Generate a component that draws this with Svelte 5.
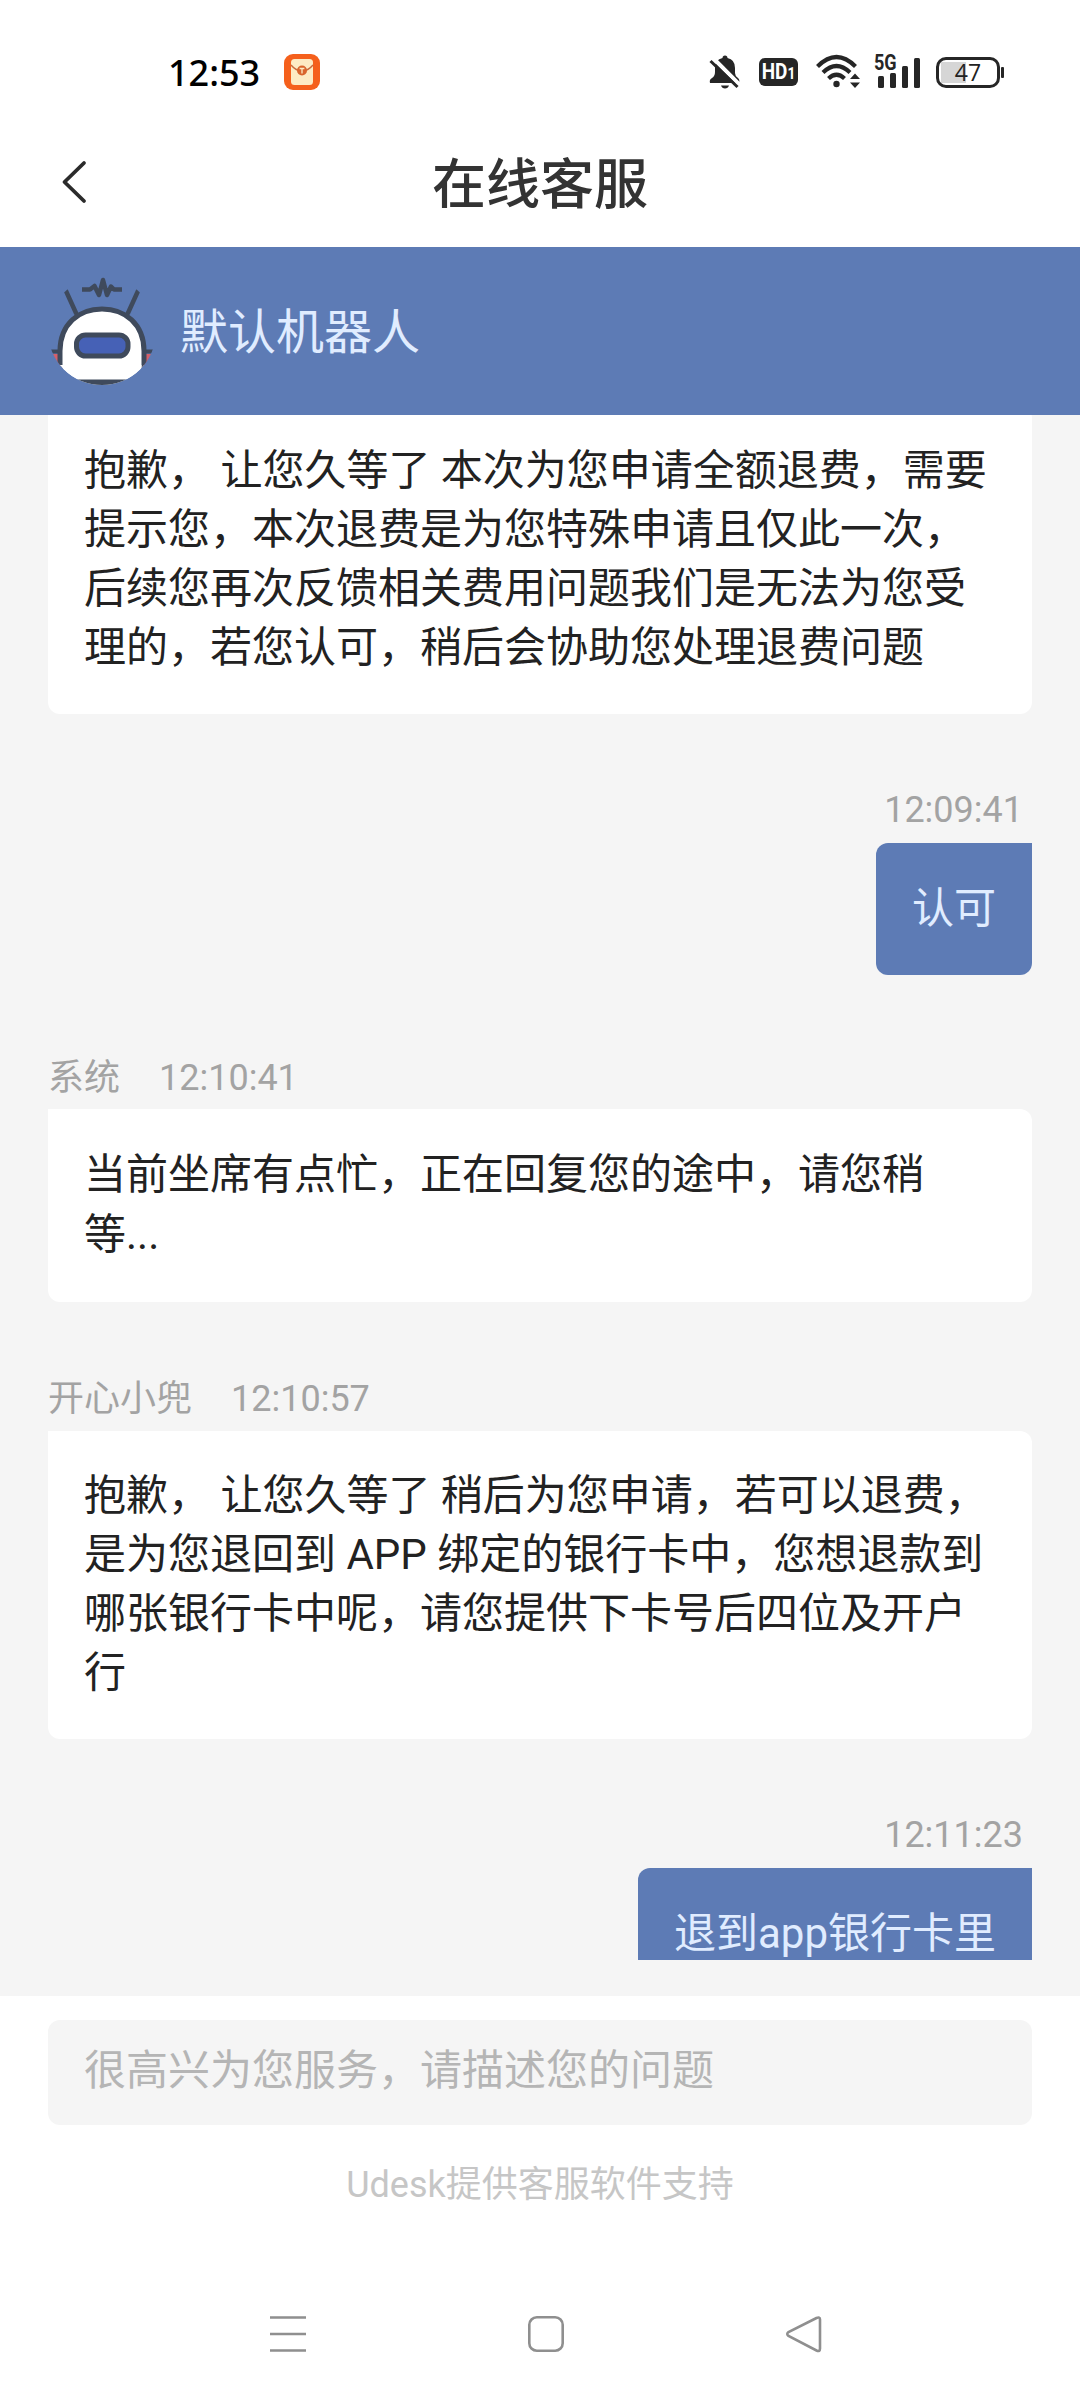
<script lang="ts">
	interface Message {
		id: number;
		name?: string;
		time?: string;
		lines: string[];
		kind?: 'mine' | 'system';
	}

	const messages: Message[] = [
		{
			id: 1,
			lines: [
				'抱歉， 让您久等了 本次为您申请全额退费，需要',
				'提示您，本次退费是为您特殊申请且仅此一次，',
				'后续您再次反馈相关费用问题我们是无法为您受',
				'理的，若您认可，稍后会协助您处理退费问题'
			]
		},
		{ id: 2, time: '12:09:41', lines: ['认可'], kind: 'mine' },
		{
			id: 3,
			name: '系统',
			time: '12:10:41',
			lines: ['当前坐席有点忙，正在回复您的途中，请您稍', '等...'],
			kind: 'system'
		},
		{
			id: 4,
			name: '开心小兜',
			time: '12:10:57',
			lines: [
				'抱歉， 让您久等了 稍后为您申请，若可以退费，',
				'是为您退回到 APP 绑定的银行卡中，您想退款到',
				'哪张银行卡中呢，请您提供下卡号后四位及开户',
				'行'
			]
		},
		{ id: 5, time: '12:11:23', lines: ['退到app银行卡里'], kind: 'mine' }
	];

	let draft = $state('');
</script>

<div class="screen">
	<div class="status-bar">
		<span class="clock">12:53</span>
		<svg class="app-badge" width="36" height="36" viewBox="0 0 36 36">
			<rect width="36" height="36" rx="9" fill="#f5601c" />
			<rect x="7" y="5" width="22" height="26" rx="3.5" fill="#fdebc4" />
			<path d="M7 11 Q12 17 18 17 Q24 17 29 11" fill="none" stroke="#c96a3c" stroke-width="1.4" />
			<circle cx="18" cy="16.5" r="5" fill="#d9652d" />
			<path d="M15.6 14.5 H20.4 M18 14.5 V19.5" stroke="#fdebc4" stroke-width="1.3" />
		</svg>

		<div class="status-icons">
			<svg width="32" height="34" viewBox="0 0 32 34">
				<path d="M1 28 Q0 24.500 3 23 Q6 21 6 17 V13 Q6 4.500 13.500 3 Q13.500 .5 16 .5 Q18.500 .5 18.500 3 Q26 4.500 26 13 V18 Q26 21 29 23 Q31 24.500 30 28 Z" fill="#262626" />
				<path d="M12 30.500 H20 Q19 33.500 16 33.500 Q13 33.500 12 30.500 Z" fill="#262626" />
				<path d="M4.500 3.500 L31 30" stroke="#fff" stroke-width="4" />
				<path d="M1.500 6 L28.500 32" stroke="#262626" stroke-width="3" />
			</svg>
			<div class="hd"><span>HD<small>1</small></span></div>
			<svg width="46" height="36" viewBox="0 0 46 36">
				<g fill="none" stroke="#262626" stroke-width="4.200">
					<path d="M1.500 12.500 Q20.500 -6.500 39.500 12.500" />
					<path d="M7 18.500 Q20.500 5.500 34 18.500" />
					<path d="M12.500 24.500 Q20.500 17 28.500 24.500" />
				</g>
				<circle cx="20.500" cy="30" r="3.200" fill="#262626" />
				<path d="M34 25 L39 19.500 L44 25 Z M34 28.500 L39 34 L44 28.500 Z" fill="#262626" />
			</svg>
			<div class="signal">
				<span class="net">5G</span>
				<svg width="46" height="34" viewBox="0 0 46 34">
					<g fill="#262626">
						<rect x="3" y="21" width="6" height="12" rx="1.500" />
						<rect x="15" y="18" width="6" height="15" rx="1.500" />
						<rect x="27" y="11" width="6" height="22" rx="1.500" />
						<rect x="39" y="3" width="6" height="30" rx="1.500" />
					</g>
				</svg>
			</div>
			<div class="battery"><span>47</span></div>
		</div>
	</div>

	<header class="title-bar">
		<button class="back" aria-label="返回">
			<svg width="28" height="46" viewBox="0 0 28 46">
				<path d="M24 4 L4.500 23 L24 42" fill="none" stroke="#2b2b2b" stroke-width="3.800" stroke-linecap="round" stroke-linejoin="round" />
			</svg>
		</button>
		<h1>在线客服</h1>
	</header>

	<div class="agent-bar">
		<svg width="108" height="108" viewBox="0 0 108 108">
			<defs>
				<clipPath id="avatar"><circle cx="54" cy="54" r="54" /></clipPath>
			</defs>
			<g clip-path="url(#avatar)" stroke="#3f4a5c" stroke-width="4">
				<path d="M3 77 H14 V92 H3 Z M94 77 H105 V92 H94 Z" fill="#d4606b" stroke="none" />
				<path d="M2 74.500 H12 M96 74.500 H106" />
				<path d="M18 14 L28 36 M90 14 L80 36" stroke-width="4.500" stroke-linecap="round" />
				<path d="M34 12.500 H42 L46.500 9 L51 18 L55 3 L59 18 L63 9.500 L66 12.500 H74" fill="none" stroke-width="4.500" stroke-linejoin="round" />
				<path d="M12 116 V74 C12 47 31 32 54 32 C77 32 96 47 96 74 V116 Z" fill="#fff" stroke-width="5" />
				<path d="M14.500 88 H93.500 V102.500 H8 V88 Z" fill="#fff" stroke="none" />
				<path d="M8 102.500 H100 V110 H8 Z" fill="#3f4a5c" stroke="none" />
				<rect x="28.500" y="58" width="51.500" height="21" rx="9" fill="#4661b6" stroke-width="5" />
			</g>
		</svg>
		<span>默认机器人</span>
	</div>

	<main class="chat">
		<div class="thread">
			{#each messages as msg (msg.id)}
				<div class="message {msg.kind}">
					{#if msg.time}
						<div class="meta">
							{#if msg.name}<span>{msg.name}</span>{/if}
							<time>{msg.time}</time>
						</div>
					{/if}
					<div class="bubble">
						{#each msg.lines as line}
							<p>{line}</p>
						{/each}
					</div>
				</div>
			{/each}
		</div>
	</main>

	<footer class="composer">
		<input bind:value={draft} placeholder="很高兴为您服务，请描述您的问题" />
		<p class="support">Udesk提供客服软件支持</p>
	</footer>

	<nav class="system-nav">
		<svg width="38" height="38" viewBox="0 0 38 38">
			<path d="M1 2.500 H37 M1 19 H37 M1 35.500 H37" />
		</svg>
		<svg width="38" height="38" viewBox="0 0 38 38">
			<rect x="2.300" y="2.300" width="33.400" height="33.400" rx="7.500" />
		</svg>
		<svg width="38" height="38" viewBox="0 0 38 38">
			<path d="M31.500 3 L3.500 17 Q1 19 3.500 21 L31.500 35.500 Q35 37 35 33.500 V4.500 Q35 1.500 31.500 3 Z" />
		</svg>
	</nav>
</div>

<style>
	:global(body) {
		margin: 0;
	}

	.screen {
		display: flex;
		flex-direction: column;
		width: 1080px;
		height: 2400px;
		overflow: hidden;
		background: #fff;
		font-family: Roboto, 'Noto Sans CJK SC', sans-serif;
		color: #222;
	}

	p,
	h1 {
		margin: 0;
	}

	.status-bar {
		display: flex;
		align-items: center;
		box-sizing: border-box;
		height: 120px;
		padding: 26px 76px 2px 168px;
	}

	.clock {
		width: 116px;
		padding-top: 2px;
		font-family: 'Noto Sans', sans-serif;
		font-size: 36px;
		font-weight: 500;
		color: #000;
		line-height: 36px;
	}

	.status-icons {
		display: flex;
		align-items: center;
		margin-left: auto;
	}

	.hd {
		display: flex;
		justify-content: center;
		width: 39px;
		height: 28px;
		margin: 0 18px;
		border-radius: 6px;
		background: #262626;
		color: #fff;
		font-size: 22px;
		font-weight: 700;
		line-height: 28px;
	}

	.hd span {
		transform: scaleX(0.86);
	}

	.hd small {
		font-size: 16px;
	}

	.signal {
		position: relative;
		height: 34px;
		margin: 0 15px 0 13px;
	}

	.net {
		position: absolute;
		top: -1px;
		left: -1px;
		font-size: 22px;
		font-weight: 700;
		line-height: 18px;
		transform: scaleX(0.82);
		transform-origin: left;
		color: #262626;
	}

	.battery {
		position: relative;
		display: flex;
		align-items: center;
		justify-content: center;
		box-sizing: border-box;
		width: 64px;
		height: 31px;
		margin-right: 4px;
		border: 3px solid #262626;
		border-radius: 10px;
		background: linear-gradient(#d6d6d6, #d6d6d6) 2px 2px / 25px 21px no-repeat;
		font-family: 'Open Sans', sans-serif;
		font-size: 23px;
		line-height: 25px;
	}

	.battery::after {
		content: '';
		position: absolute;
		top: 7px;
		right: -7px;
		width: 3px;
		height: 11px;
		border-radius: 1px;
		background: #262626;
	}

	.title-bar {
		display: flex;
		align-items: center;
		justify-content: center;
		position: relative;
		height: 127px;
	}

	.back {
		position: absolute;
		left: 60px;
		top: 39px;
		padding: 0;
		border: none;
		background: none;
		line-height: 0;
	}

	h1 {
		padding-top: 4px;
		font-size: 54px;
		font-weight: 500;
		line-height: 60px;
		color: #333;
	}

	.agent-bar {
		display: flex;
		align-items: center;
		gap: 24px;
		box-sizing: border-box;
		height: 168px;
		padding-left: 48px;
		background: #5d7bb5;
		color: #e0ecff;
		font-size: 48px;
	}

	.agent-bar span {
		padding-bottom: 7px;
	}

	.chat {
		height: 1581px;
		box-sizing: border-box;
		padding-bottom: 36px;
		background: #f5f5f5;
	}

	/* scrolled near the newest message, so both ends are cut off */
	.thread {
		display: flex;
		flex-direction: column;
		justify-content: flex-end;
		gap: 70px;
		height: 1545px;
		padding: 0 48px;
		overflow: hidden;
	}

	.message {
		flex: none;
		display: flex;
		flex-direction: column;
		padding-top: 2px;
	}

	.message.mine {
		padding-top: 1px;
	}

	.message.system {
		padding-top: 8px;
	}

	.message:first-child {
		padding-top: 0;
	}

	.message:last-child {
		margin-bottom: -40px;
	}

	.meta {
		display: flex;
		gap: 39px;
		height: 50px;
		margin-bottom: 7px;
		font-size: 36px;
		line-height: 50px;
		color: #a3a3a3;
	}

	.system .meta {
		margin-bottom: 6px;
	}

	.mine .meta {
		justify-content: flex-end;
		margin-bottom: 8px;
		padding-right: 9px;
	}

	.bubble {
		padding: 35px 36px 37px;
		border-radius: 0 12px 12px 12px;
		background: #fff;
		font-size: 42px;
		line-height: 59px;
		white-space: pre;
	}

	.system .bubble {
		padding: 36px 36px 37px;
		line-height: 60px;
	}

	.mine .bubble {
		align-self: flex-end;
		padding: 36px 36px 37px;
		border-radius: 12px 0 12px 12px;
		background: #5d7bb5;
		color: #e0ecff;
	}

	.composer {
		display: flex;
		flex-direction: column;
		align-items: center;
		height: 260px;
		padding: 24px 48px 0;
	}

	input {
		width: 100%;
		height: 105px;
		box-sizing: border-box;
		padding: 0 36px 4px;
		border: none;
		border-radius: 12px;
		background: #f5f5f5;
		font: inherit;
		font-size: 42px;
	}

	input::placeholder {
		color: #b5b5b5;
		opacity: 1;
	}

	.support {
		margin-top: 35px;
		font-size: 36px;
		line-height: 50px;
		color: #c6c6c6;
	}

	.system-nav {
		display: flex;
		justify-content: space-between;
		padding: 35px 257px 0 269px;
	}

	.system-nav svg {
		fill: none;
		stroke: #8f8f8f;
		stroke-width: 2.6;
	}
</style>
